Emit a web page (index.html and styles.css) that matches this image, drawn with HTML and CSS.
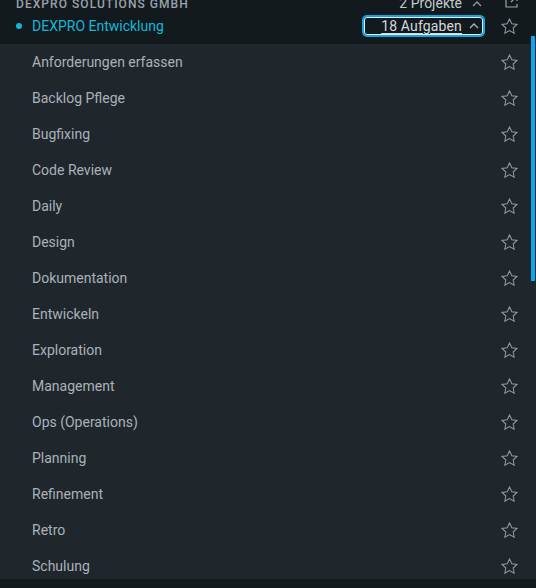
FILE: index.html
```html
<!DOCTYPE html>
<html lang="de">
<head>
<meta charset="utf-8">
<link rel="stylesheet" href="styles.css">
</head>
<body>
<div class="viewport">
  <div class="company">
    <span class="company-name">DEXPRO SOLUTIONS GMBH</span>
    <span class="company-right">
      <span class="count">2 Projekte</span>
      <svg class="chev" viewBox="0 0 10 6" width="10" height="6"><path d="M1 5 L5 1 L9 5" fill="none" stroke="#8e9aa3" stroke-width="1.3"/></svg>
      <svg class="ext" viewBox="0 0 16 16" width="16" height="16"><path d="M6 3 H3 V14 H14 V11" fill="none" stroke="#9aa5ad" stroke-width="1.2"/><path d="M9 3 H14 V8 M14 3 L8 9" fill="none" stroke="#9aa5ad" stroke-width="1.2"/></svg>
    </span>
  </div>
  <div class="project">
    <span class="dot"></span>
    <span class="project-name">DEXPRO Entwicklung</span>
    <button class="tasks">
      <span class="tasks-label">18 Aufgaben</span>
      <svg viewBox="0 0 10 6" width="10" height="6"><path d="M1 5 L5 1 L9 5" fill="none" stroke="#a9b3ba" stroke-width="1.3"/></svg>
    </button>
    <svg class="star" viewBox="0 0 24 24" width="19" height="19"><polygon points="12 2.5 14.9 8.6 21.5 9.4 16.6 13.9 17.9 20.5 12 17.2 6.1 20.5 7.4 13.9 2.5 9.4 9.1 8.6" fill="none" stroke="#8e9aa3" stroke-width="1.3" stroke-linejoin="miter"/></svg>
  </div>
  <ul class="list">
    <li><span>Anforderungen erfassen</span><svg class="star" viewBox="0 0 24 24" width="19" height="19"><polygon points="12 2.5 14.9 8.6 21.5 9.4 16.6 13.9 17.9 20.5 12 17.2 6.1 20.5 7.4 13.9 2.5 9.4 9.1 8.6" fill="none" stroke="#8e9aa3" stroke-width="1.3"/></svg></li>
    <li><span>Backlog Pflege</span><svg class="star" viewBox="0 0 24 24" width="19" height="19"><polygon points="12 2.5 14.9 8.6 21.5 9.4 16.6 13.9 17.9 20.5 12 17.2 6.1 20.5 7.4 13.9 2.5 9.4 9.1 8.6" fill="none" stroke="#8e9aa3" stroke-width="1.3"/></svg></li>
    <li><span>Bugfixing</span><svg class="star" viewBox="0 0 24 24" width="19" height="19"><polygon points="12 2.5 14.9 8.6 21.5 9.4 16.6 13.9 17.9 20.5 12 17.2 6.1 20.5 7.4 13.9 2.5 9.4 9.1 8.6" fill="none" stroke="#8e9aa3" stroke-width="1.3"/></svg></li>
    <li><span>Code Review</span><svg class="star" viewBox="0 0 24 24" width="19" height="19"><polygon points="12 2.5 14.9 8.6 21.5 9.4 16.6 13.9 17.9 20.5 12 17.2 6.1 20.5 7.4 13.9 2.5 9.4 9.1 8.6" fill="none" stroke="#8e9aa3" stroke-width="1.3"/></svg></li>
    <li><span>Daily</span><svg class="star" viewBox="0 0 24 24" width="19" height="19"><polygon points="12 2.5 14.9 8.6 21.5 9.4 16.6 13.9 17.9 20.5 12 17.2 6.1 20.5 7.4 13.9 2.5 9.4 9.1 8.6" fill="none" stroke="#8e9aa3" stroke-width="1.3"/></svg></li>
    <li><span>Design</span><svg class="star" viewBox="0 0 24 24" width="19" height="19"><polygon points="12 2.5 14.9 8.6 21.5 9.4 16.6 13.9 17.9 20.5 12 17.2 6.1 20.5 7.4 13.9 2.5 9.4 9.1 8.6" fill="none" stroke="#8e9aa3" stroke-width="1.3"/></svg></li>
    <li><span>Dokumentation</span><svg class="star" viewBox="0 0 24 24" width="19" height="19"><polygon points="12 2.5 14.9 8.6 21.5 9.4 16.6 13.9 17.9 20.5 12 17.2 6.1 20.5 7.4 13.9 2.5 9.4 9.1 8.6" fill="none" stroke="#8e9aa3" stroke-width="1.3"/></svg></li>
    <li><span>Entwickeln</span><svg class="star" viewBox="0 0 24 24" width="19" height="19"><polygon points="12 2.5 14.9 8.6 21.5 9.4 16.6 13.9 17.9 20.5 12 17.2 6.1 20.5 7.4 13.9 2.5 9.4 9.1 8.6" fill="none" stroke="#8e9aa3" stroke-width="1.3"/></svg></li>
    <li><span>Exploration</span><svg class="star" viewBox="0 0 24 24" width="19" height="19"><polygon points="12 2.5 14.9 8.6 21.5 9.4 16.6 13.9 17.9 20.5 12 17.2 6.1 20.5 7.4 13.9 2.5 9.4 9.1 8.6" fill="none" stroke="#8e9aa3" stroke-width="1.3"/></svg></li>
    <li><span>Management</span><svg class="star" viewBox="0 0 24 24" width="19" height="19"><polygon points="12 2.5 14.9 8.6 21.5 9.4 16.6 13.9 17.9 20.5 12 17.2 6.1 20.5 7.4 13.9 2.5 9.4 9.1 8.6" fill="none" stroke="#8e9aa3" stroke-width="1.3"/></svg></li>
    <li><span>Ops (Operations)</span><svg class="star" viewBox="0 0 24 24" width="19" height="19"><polygon points="12 2.5 14.9 8.6 21.5 9.4 16.6 13.9 17.9 20.5 12 17.2 6.1 20.5 7.4 13.9 2.5 9.4 9.1 8.6" fill="none" stroke="#8e9aa3" stroke-width="1.3"/></svg></li>
    <li><span>Planning</span><svg class="star" viewBox="0 0 24 24" width="19" height="19"><polygon points="12 2.5 14.9 8.6 21.5 9.4 16.6 13.9 17.9 20.5 12 17.2 6.1 20.5 7.4 13.9 2.5 9.4 9.1 8.6" fill="none" stroke="#8e9aa3" stroke-width="1.3"/></svg></li>
    <li><span>Refinement</span><svg class="star" viewBox="0 0 24 24" width="19" height="19"><polygon points="12 2.5 14.9 8.6 21.5 9.4 16.6 13.9 17.9 20.5 12 17.2 6.1 20.5 7.4 13.9 2.5 9.4 9.1 8.6" fill="none" stroke="#8e9aa3" stroke-width="1.3"/></svg></li>
    <li><span>Retro</span><svg class="star" viewBox="0 0 24 24" width="19" height="19"><polygon points="12 2.5 14.9 8.6 21.5 9.4 16.6 13.9 17.9 20.5 12 17.2 6.1 20.5 7.4 13.9 2.5 9.4 9.1 8.6" fill="none" stroke="#8e9aa3" stroke-width="1.3"/></svg></li>
    <li><span>Schulung</span><svg class="star" viewBox="0 0 24 24" width="19" height="19"><polygon points="12 2.5 14.9 8.6 21.5 9.4 16.6 13.9 17.9 20.5 12 17.2 6.1 20.5 7.4 13.9 2.5 9.4 9.1 8.6" fill="none" stroke="#8e9aa3" stroke-width="1.3"/></svg></li>
  </ul>
  <div class="scrollbar"></div>
</div>
</body>
</html>
```

FILE: styles.css
```css
html, body {
  margin: 0;
  padding: 0;
  background: #131a1e;
}
body {
  width: 536px;
  height: 588px;
  overflow: hidden;
  font-family: Roboto, "Liberation Sans", sans-serif;
}
.viewport {
  position: relative;
  height: 579px;
  overflow: hidden;
  background: #1f272d;
}
.company {
  height: 24px;
  margin-top: -16px;
  background: #131a1e;
  display: flex;
  align-items: flex-end;
  justify-content: space-between;
  padding: 0 17px 0 16px;
}
.company-name {
  font-size: 12px;
  line-height: 8px;
  font-weight: 500;
  letter-spacing: 1.05px;
  color: #9aa3aa;
}
.company-right {
  display: flex;
  align-items: flex-end;
}
.count {
  font-size: 14px;
  line-height: 10px;
  color: #c2c9ce;
}
.chev {
  margin: 0 0 1px 10px;
}
.ext {
  margin-left: 21px;
  margin-bottom: -1px;
}
.project {
  height: 36px;
  background: #131a1e;
  display: flex;
  align-items: center;
  padding: 0 17px 0 16px;
}
.dot {
  width: 6px;
  height: 6px;
  border-radius: 50%;
  background: #11b5d9;
  margin-right: 10px;
}
.project-name {
  font-size: 14px;
  color: #15b6d8;
  flex: 1;
}
.tasks {
  height: 18px;
  width: 119px;
  margin-right: 17px;
  border: 1px solid #e8eef2;
  border-radius: 3px;
  box-shadow: 0 0 0 2px #0ea5e9;
  background: transparent;
  display: flex;
  align-items: center;
  justify-content: flex-end;
  padding: 0 3px 0 0;
  font-family: Roboto, "Liberation Sans", sans-serif;
  cursor: pointer;
}
.tasks-label {
  font-size: 14px;
  letter-spacing: 0.15px;
  color: #d3d9dd;
  text-decoration: underline;
  text-underline-offset: 2px;
  margin-right: 7px;
}
.star {
  display: block;
  flex: none;
}
.list {
  list-style: none;
  margin: 0;
  padding: 0;
}
.list li {
  height: 36px;
  display: flex;
  align-items: center;
  justify-content: space-between;
  padding: 0 17px 0 32px;
  font-size: 14px;
  color: #a9b2b9;
}
.scrollbar {
  position: absolute;
  right: 1px;
  top: 36px;
  width: 4px;
  height: 245px;
  background: #0ea5e9;
}
```
